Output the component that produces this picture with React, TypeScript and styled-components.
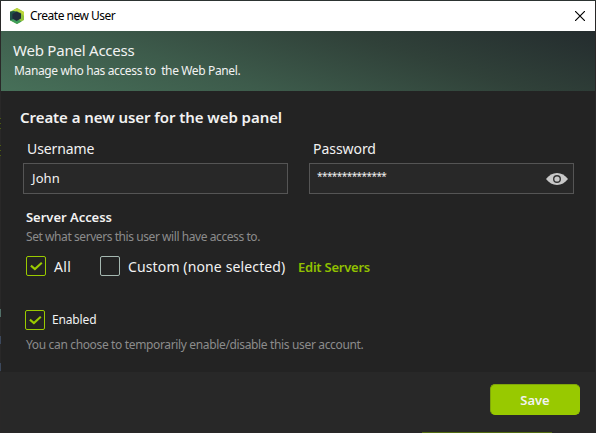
import React from 'react';
import styled, { createGlobalStyle } from 'styled-components';

const GlobalStyle = createGlobalStyle`
  * { box-sizing: border-box; }
  html, body { margin: 0; background: #232323; overflow: hidden; }
  body { font-family: "Noto Sans", "Open Sans", sans-serif; }
`;

const Backdrop = styled.div`
  width: 596px;
  height: 433px;
  padding: 1px 1px 0;
  display: flex;
  flex-direction: column;
  background:
    linear-gradient(#527068, #527068) 0 309px / 1px 8px no-repeat,
    linear-gradient(#3c485c, #3c485c) 0 336px / 1px 8px no-repeat,
    linear-gradient(#3c485c, #3c485c) 0 363px / 1px 8px no-repeat,
    repeating-linear-gradient(#4c5c10 0 1px, #232323 1px 5px) 0 118px / 1px 11px no-repeat,
    repeating-linear-gradient(#4c5c10 0 1px, #232323 1px 5px) 0 145px / 1px 11px no-repeat,
    linear-gradient(#2c3331, #2c3331) 0 0 / 100% 1px no-repeat,
    #292828;
`;

const TitleBar = styled.header`
  height: 30px;
  flex: none;
  display: flex;
  align-items: center;
  padding: 0 10px 0 9px;
  background: #fff;
`;

const Text = styled.span<{ $size: number; $line: number; $track?: number; $weight?: number; $color?: string }>`
  display: block;
  white-space: pre;
  font-size: ${p => p.$size}px;
  line-height: ${p => p.$line}px;
  letter-spacing: ${p => p.$track ?? 0}px;
  font-weight: ${p => p.$weight ?? 400};
  color: ${p => p.$color ?? '#f2f2f2'};
`;

const Caption = styled(Text)`
  flex: 1;
  margin-left: 6px;
`;

const IconButton = styled.button`
  display: flex;
  padding: 0;
  border: 0;
  background: none;
`;

const Banner = styled.section`
  height: 60px;
  flex: none;
  padding: 9px 12px;
  background: linear-gradient(17deg, #477059 0%, #3d5b4b 34%, #304139 67%, #242c2e 100%);
`;

const BannerNote = styled(Text)`
  margin: 1px 0 0 1px;
`;

const Body = styled.main`
  height: 281px;
  flex: none;
  padding: 16px 20px 0 19px;
  background: #232323;
`;

const Fields = styled.div`
  display: grid;
  grid-template-columns: 265px 265px;
  column-gap: 21px;
  margin: 12px 0 0 3px;
`;

const Label = styled(Text)`
  margin: 0 0 4px 4px;
`;

const InputBox = styled.div`
  height: 31px;
  display: flex;
  align-items: center;
  justify-content: space-between;
  padding: 0 5px 0 7px;
  border: 1px solid #555;
  background: #282828;
`;

const FieldValue = styled(Text)`
  margin: -1px 0 0 1px;
`;

const MaskedValue = styled(Text)`
  margin-top: -5px;
`;

const Group = styled.section<{ $top: number }>`
  margin: ${p => p.$top}px 0 0 6px;
`;

const Hint = styled(Text)<{ $top: number }>`
  margin-top: ${p => p.$top}px;
`;

const Options = styled.div`
  display: flex;
  align-items: center;
  margin-top: 11px;
`;

const OptionText = styled(Text)`
  padding-top: 2px;
`;

const Option = styled.label<{ $width?: number; $gap: number; $shift?: number }>`
  display: flex;
  align-items: center;
  height: 20px;
  width: ${p => (p.$width ? `${p.$width}px` : 'auto')};
  gap: ${p => p.$gap}px;
  margin-left: ${p => p.$shift ?? 0}px;
`;

const Box = styled.span<{ $on?: boolean }>`
  width: 20px;
  height: 20px;
  flex: none;
  display: flex;
  border: 1px solid ${p => (p.$on ? '#9aca00' : '#a5b8b1')};
  border-radius: 2px;
`;

const EditLink = styled(Text)`
  height: 20px;
  padding-top: 1px;
`;

const Footer = styled.footer`
  height: 60px;
  flex: none;
  display: flex;
  justify-content: flex-end;
  padding: 12px 15px 0;
  background: #282828;
`;

const SaveButton = styled.button`
  width: 90px;
  height: 31px;
  padding: 0;
  display: flex;
  align-items: center;
  justify-content: center;
  border: 1px solid #98c900;
  border-top-color: #80a60a;
  border-left-color: #80a60a;
  border-radius: 5px;
  background: #98c900;
  font-family: inherit;
`;

const Strip = styled.div`
  width: 130px;
  height: 1px;
  margin-left: 421px;
  background: #536b12;
`;

const Logo = () => (
  <svg width="14" height="16" viewBox="0 0 14 16">
    <path d="M7 0 14 4v8l-7 4-7-3.8V3.8z" fill="#8fc23a" />
    <path d="M7 0 14 4v4L10 4 3 2.4z" fill="#bdd63c" />
    <path d="M0 3.8 3.4 3 8 4 6 13 0 12.2z" fill="#1f5346" />
    <path d="M0 12.2 4 11l5 1 2.6 1.4L7 16z" fill="#3f9d5c" />
    <path d="m6.8 3.6 4.2 2v5L6.6 13 2.4 10.6V6z" fill="#1f2b3a" />
  </svg>
);

const Close = () => (
  <svg width="10" height="10" viewBox="0 0 10 10">
    <path d="m0 0 10 10M10 0 0 10" stroke="#000" strokeWidth="1.15" />
  </svg>
);

const Eye = () => (
  <svg width="22" height="12" viewBox="0 0 22 12">
    <path d="M0 6C3 2.2 6.7 0 11 0s8 2.2 11 6c-3 3.8-6.7 6-11 6S3 9.8 0 6z" fill="#c8c8c8" />
    <circle cx="11" cy="6" r="3.3" fill="none" stroke="#333" strokeWidth="1.4" />
  </svg>
);

const Check = () => (
  <svg width="18" height="18" viewBox="0 0 18 18">
    <path d="m3.9 8.6 4 3.4 6.9-6.2" fill="none" stroke="#9aca00" strokeWidth="2.1" />
  </svg>
);

export default function App() {
  return (
    <>
      <GlobalStyle />
      <Backdrop>
        <TitleBar>
          <Logo />
          <Caption $size={12} $line={18} $track={-0.5} $color="#000">Create new User</Caption>
          <IconButton aria-label="Close"><Close /></IconButton>
        </TitleBar>
        <Banner>
          <Text $size={15} $line={20} $track={-0.22}>Web Panel Access</Text>
          <BannerNote $size={12} $line={20} $track={-0.37}>Manage who has access to  the Web Panel.</BannerNote>
        </Banner>
        <Body>
          <Text $size={15} $line={20} $weight={600} $track={-0.06}>Create a new user for the web panel</Text>
          <Fields>
            <div>
              <Label $size={14} $line={20} $track={-0.1}>Username</Label>
              <InputBox><FieldValue $size={13} $line={18} $track={0.1}>John</FieldValue></InputBox>
            </div>
            <div>
              <Label $size={14} $line={20} $track={-0.05}>Password</Label>
              <InputBox>
                <MaskedValue $size={10} $line={18} $track={-0.56}>**************</MaskedValue>
                <IconButton aria-label="Show password"><Eye /></IconButton>
              </InputBox>
            </div>
          </Fields>
          <Group $top={14}>
            <Text $size={13} $line={18} $weight={600} $track={-0.03}>Server Access</Text>
            <Hint $top={2} $size={12} $line={17} $track={-0.43} $color="#8c8c8c">Set what servers this user will have access to.</Hint>
            <Options>
              <Option $width={74} $gap={8}><Box $on><Check /></Box><OptionText $size={14} $line={20} $track={0.3}>All</OptionText></Option>
              <Option $width={198} $gap={8}><Box /><OptionText $size={14} $line={20} $track={0.13}>Custom (none selected)</OptionText></Option>
              <EditLink $size={13} $line={20} $weight={600} $track={-0.24} $color="#91c000">Edit Servers</EditLink>
            </Options>
          </Group>
          <Group $top={34}>
            <Option $gap={7} $shift={-1}><Box $on><Check /></Box><Text $size={12} $line={20} $track={-0.15}>Enabled</Text></Option>
            <Hint $top={6} $size={12} $line={17} $track={-0.35} $color="#8c8c8c">You can choose to temporarily enable/disable this user account.</Hint>
          </Group>
        </Body>
        <Footer>
          <SaveButton><Text $size={13} $line={20} $weight={600}>Save</Text></SaveButton>
        </Footer>
        <Strip />
      </Backdrop>
    </>
  );
}
